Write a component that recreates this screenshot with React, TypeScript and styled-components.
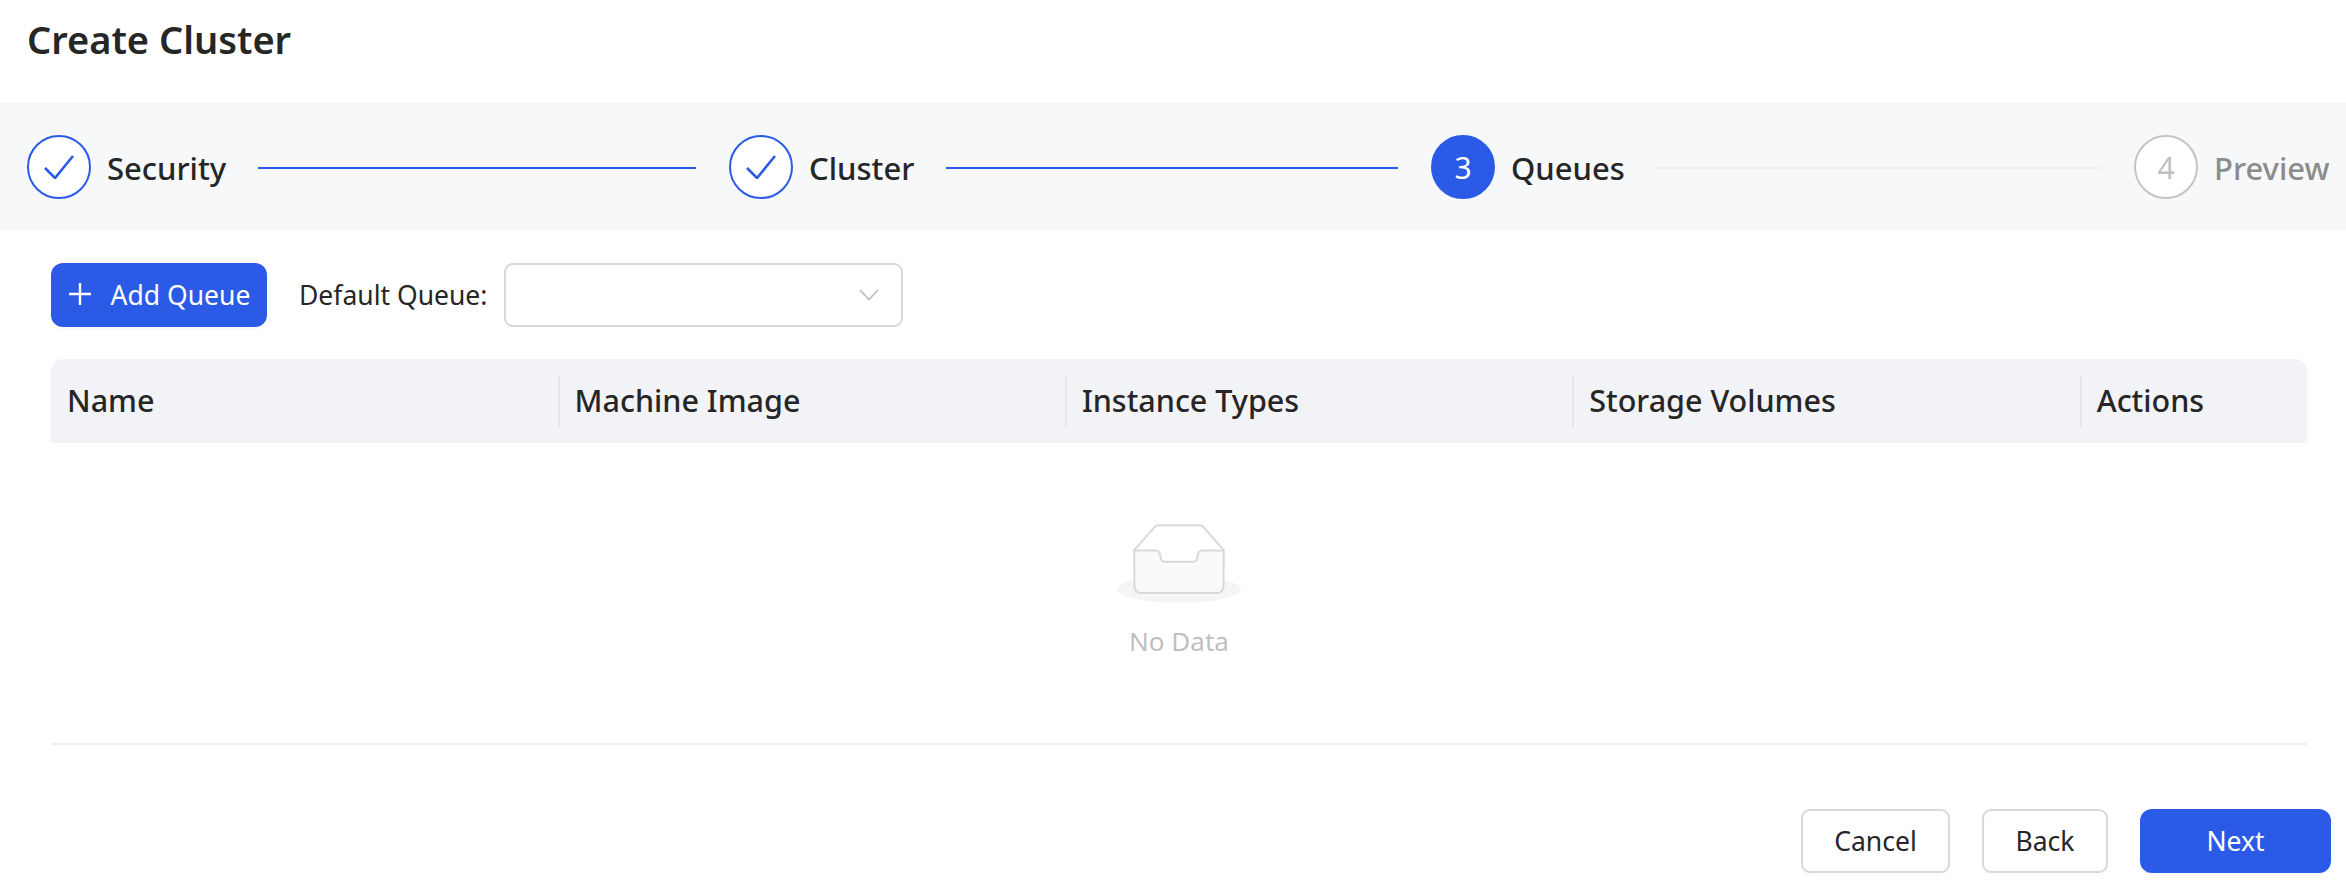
import React from "react";
import styled, { createGlobalStyle } from "styled-components";

const FONT = `"Noto Sans", "Open Sans", "Liberation Sans", sans-serif`;
const BLUE = "#2b5ae6";

const Global = createGlobalStyle`
  html, body { margin: 0; padding: 0; background: #fff; }
  body { font-family: ${FONT}; color: #262626; }
  * { box-sizing: border-box; }
`;

const Page = styled.div`
  width: 2346px;
  height: 889px;
  overflow: hidden;
`;

const Title = styled.h1`
  margin: 0;
  height: 103px;
  padding: 15px 0 0 27px;
  font-size: 38px;
  line-height: 48px;
  font-weight: 600;
  color: #262626;
`;

const StepBand = styled.div`
  height: 128px;
  background: #f7f8fa;
  padding-left: 27px;
  display: grid;
  grid-template-columns: 702px 702px 703px auto;
  align-items: center;
`;

const Step = styled.div`
  display: flex;
  align-items: center;
  gap: 16px;
`;

const Circle = styled.div<{ $state: "done" | "active" | "todo" }>`
  flex: none;
  width: 64px;
  height: 64px;
  border-radius: 50%;
  display: flex;
  align-items: center;
  justify-content: center;
  font-size: 30px;
  border: 2px solid ${(p) => (p.$state === "todo" ? "#c4c4c4" : BLUE)};
  background: ${(p) => (p.$state === "active" ? BLUE : "#fff")};
  color: ${(p) => (p.$state === "active" ? "#fff" : "#bfbfbf")};
`;

const StepLabel = styled.span<{ $muted?: boolean }>`
  font-size: 31px;
  font-weight: 500;
  line-height: 40px;
  padding-top: 2px;
  white-space: nowrap;
  color: ${(p) => (p.$muted ? "#8c8c8c" : "#262626")};
`;

const Connector = styled.div<{ $done?: boolean }>`
  flex: 1;
  height: 2px;
  margin: 2px 33px 0 16px;
  background: ${(p) => (p.$done ? BLUE : "#eeeff2")};
`;

const Content = styled.div`
  padding: 32px 39px 0 51px;
`;

const Toolbar = styled.div`
  display: flex;
  align-items: center;
  height: 64px;
`;

const PrimaryButton = styled.button<{ $width: number }>`
  width: ${(p) => p.$width}px;
  height: 64px;
  border: 0;
  border-radius: 12px;
  background: ${BLUE};
  color: #fff;
  font-family: ${FONT};
  font-size: 26.5px;
  display: flex;
  align-items: center;
  justify-content: center;
  box-shadow: 0 3px 0 rgba(0, 0, 0, 0.02);
  padding: 0;
`;

const FieldLabel = styled.label`
  margin-left: 32px;
  font-size: 26.5px;
  color: #262626;
  white-space: nowrap;
`;

const SelectBox = styled.div`
  margin-left: 17px;
  width: 399px;
  height: 64px;
  border: 2px solid #d9d9d9;
  border-radius: 9px;
  background: #fff;
  display: flex;
  align-items: center;
  justify-content: flex-end;
  padding-right: 22px;
`;

const Table = styled.div`
  margin-top: 32px;
  border-bottom: 2px solid #f0f0f0;
`;

const HeaderRow = styled.div`
  height: 84px;
  display: grid;
  grid-template-columns: 506.5px repeat(3, 507.4px) 1fr;
  align-items: center;
  background: #f2f3f7;
  border-radius: 12px 12px 0 0;
`;

const HeaderCell = styled.div<{ $first?: boolean }>`
  height: 52px;
  line-height: 50px;
  padding-left: ${(p) => (p.$first ? 16 : 15)}px;
  font-size: 30.5px;
  font-weight: 500;
  white-space: nowrap;
  color: #262626;
  border-left: ${(p) => (p.$first ? "0" : "2px solid #e3e5e9")};
`;

const Empty = styled.div`
  height: 300px;
  padding-top: 80px;
  display: flex;
  flex-direction: column;
  align-items: center;
`;

const EmptyText = styled.div`
  margin-top: 19px;
  font-size: 26px;
  line-height: 38px;
  color: #bfbfbf;
`;

const Footer = styled.div`
  margin-top: 64px;
  margin-right: -24px;
  display: flex;
  justify-content: flex-end;
  gap: 32px;
`;

const GhostButton = styled.button<{ $width: number }>`
  width: ${(p) => p.$width}px;
  height: 64px;
  border: 2px solid #d9d9d9;
  border-radius: 9px;
  background: #fff;
  color: #262626;
  font-family: ${FONT};
  font-size: 26.5px;
  box-shadow: 0 3px 0 rgba(0, 0, 0, 0.015);
  padding: 0;
`;

const PlusGlyph = styled.svg`
  flex: none;
  margin: -3px 20px 0 1px;
`;

const Check = () => (
  <svg width="30" height="24" viewBox="0 0 30 24" fill="none">
    <path d="M1 13 L11 23 L29 1" stroke={BLUE} strokeWidth="2.6" />
  </svg>
);

const Chevron = () => (
  <svg width="20" height="12" viewBox="0 0 20 12" fill="none">
    <path d="M1 1 L10 10.5 L19 1" stroke="#bfbfbf" strokeWidth="1.8" />
  </svg>
);

const EmptyIcon = () => (
  <svg width="124" height="80" viewBox="0 0 64 41">
    <g transform="translate(0 1)" fill="none" fillRule="evenodd">
      <ellipse fill="#f5f5f5" cx="32" cy="33" rx="32" ry="7" />
      <g fillRule="nonzero" stroke="#d9d9d9">
        <path d="M55 12.76L44.854 1.258C44.367.474 43.656 0 42.907 0H21.093c-.749 0-1.46.474-1.947 1.257L9 12.761V22h46v-9.24z" />
        <path
          d="M41.613 15.931c0-1.605.994-2.93 2.227-2.931H55v18.137C55 33.26 53.68 35 52.05 35h-40.1C10.32 35 9 33.259 9 31.137V13h11.16c1.233 0 2.227 1.323 2.227 2.928v.022c0 1.605 1.005 2.901 2.237 2.901h14.752c1.232 0 2.237-1.308 2.237-2.913v-.007z"
          fill="#fafafa"
        />
      </g>
    </g>
  </svg>
);

const columns = ["Name", "Machine Image", "Instance Types", "Storage Volumes", "Actions"];

export default function App() {
  return (
    <Page>
      <Global />
      <Title>Create Cluster</Title>
      <StepBand>
        <Step>
          <Circle $state="done"><Check /></Circle>
          <StepLabel>Security</StepLabel>
          <Connector $done />
        </Step>
        <Step>
          <Circle $state="done"><Check /></Circle>
          <StepLabel>Cluster</StepLabel>
          <Connector $done />
        </Step>
        <Step>
          <Circle $state="active">3</Circle>
          <StepLabel>Queues</StepLabel>
          <Connector />
        </Step>
        <Step>
          <Circle $state="todo">4</Circle>
          <StepLabel $muted>Preview</StepLabel>
        </Step>
      </StepBand>
      <Content>
        <Toolbar>
          <PrimaryButton $width={216}>
            <PlusGlyph width="22" height="22" viewBox="0 0 22 22" fill="none">
              <path d="M11 0 V22 M0 11 H22" stroke="#fff" strokeWidth="2.4" />
            </PlusGlyph>
            Add Queue
          </PrimaryButton>
          <FieldLabel>Default Queue:</FieldLabel>
          <SelectBox><Chevron /></SelectBox>
        </Toolbar>
        <Table>
          <HeaderRow>
            {columns.map((c, i) => (
              <HeaderCell key={c} $first={i === 0}>{c}</HeaderCell>
            ))}
          </HeaderRow>
          <Empty>
            <EmptyIcon />
            <EmptyText>No Data</EmptyText>
          </Empty>
        </Table>
        <Footer>
          <GhostButton $width={149}>Cancel</GhostButton>
          <GhostButton $width={126}>Back</GhostButton>
          <PrimaryButton $width={191}>Next</PrimaryButton>
        </Footer>
      </Content>
    </Page>
  );
}
